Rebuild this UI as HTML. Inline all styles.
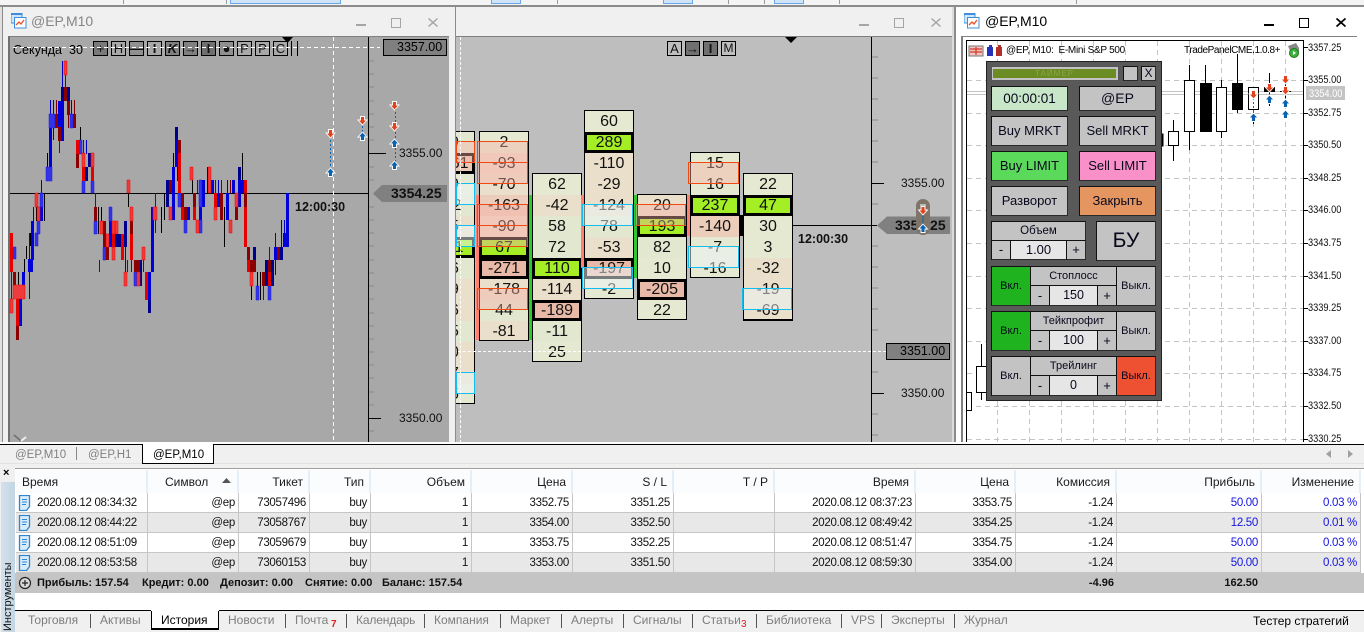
<!DOCTYPE html>
<html><head><meta charset="utf-8"><title>@EP,M10</title>
<style>
html,body{margin:0;padding:0;background:#f0f0f0}
#r{position:relative;width:1364px;height:632px;overflow:hidden;background:#f0f0f0;font-family:"Liberation Sans","Noto Sans CJK SC",sans-serif;font-size:12px;color:#000}
#r div,#r span.t{box-sizing:border-box}
.a{position:absolute}
.t{position:absolute;white-space:nowrap;line-height:14px}
.ttl{position:absolute;top:13px;font-size:14px;line-height:17px;white-space:nowrap}
svg{position:absolute;overflow:visible}
.fp{position:absolute;width:50px;border:1px solid #000;background:#e6e9d1;font-size:16px;line-height:21px;text-align:center;color:#111}
.fp div{height:21px;margin:0;position:relative}
.fp div:last-child{height:19px}
.n{background:#eadfca}
.m{background:#e2e7cf}
.g{background:#a3ee24;box-shadow:inset 0 0 0 3px #000;margin:0 -1px!important}
.p{background:#e8b9a6;box-shadow:inset 0 0 0 3px #000;margin:0 -1px!important}
.or{position:absolute;border:1px solid #f04a10;background:rgba(246,176,166,.42)}
.bl{position:absolute;border:1px solid #14bdf0;background:rgba(236,246,248,.5)}
.b{position:absolute;background:#c3c3c3;border:1px solid #111;border-right-color:#2a2a2a;border-bottom-color:#2a2a2a;text-align:center;color:#08081c;white-space:nowrap;overflow:hidden}
.tb{position:absolute;top:41px;width:15px;height:15px;border:1px solid #000;text-align:center;font-size:13px;line-height:13px;color:#111}
table{position:absolute;left:16px;top:470px;width:1345px;border-collapse:separate;border-spacing:0;table-layout:fixed;font-size:11.5px;letter-spacing:-.3px}
th{height:23px;padding:0 5px 0 0;text-align:right;font-weight:normal;background:#fbfcfe;border-right:2px solid #e6eef8;color:#1a1a1a;box-sizing:border-box;font-size:12px;letter-spacing:0}
td{height:20px;padding:1px 3px 0 0;text-align:right;border-right:1px solid #c6c6c6;border-bottom:1px solid #c6c6c6;box-sizing:border-box;color:#111;white-space:nowrap}
tr.e td{background:#e8e8e8}
td.u{color:#1414e0}
.tab{position:absolute;top:613px;color:#7d7d7d;font-size:12px;line-height:14px;white-space:nowrap}
.sp{position:absolute;top:614px;width:1px;height:14px;background:#555}
.sum{position:absolute;top:576px;font-weight:bold;font-size:11px;line-height:14px;white-space:nowrap;color:#111}
.lb{position:absolute;font-size:12px;line-height:14px;white-space:nowrap;color:#111}
.ax{position:absolute;left:1308px;font-size:11px;line-height:14px;white-space:nowrap;color:#111;transform:scaleX(.84);transform-origin:0 0}
</style></head><body><div id="r">

<!-- top strip -->
<div class="a" style="left:0;top:0;width:1364px;height:5px;background:#f4f4f4"></div>
<div class="a" style="left:230px;top:0;width:111px;height:4px;background:#cfe4f8;border:1px solid #6ba6e6;border-top:0"></div>
<div class="a" style="left:491px;top:0;width:30px;height:4px;background:#cfe4f8;border:1px solid #6ba6e6;border-top:0"></div>
<div class="a" style="left:663px;top:0;width:30px;height:4px;background:#cfe4f8;border:1px solid #6ba6e6;border-top:0"></div>
<div class="a" style="left:774px;top:0;width:30px;height:4px;background:#cfe4f8;border:1px solid #6ba6e6;border-top:0"></div>
<div class="a" style="left:123px;top:0;width:1px;height:4px;background:#999"></div>
<div class="a" style="left:226px;top:0;width:1px;height:4px;background:#999"></div>
<div class="a" style="left:557px;top:0;width:1px;height:4px;background:#999"></div>
<div class="a" style="left:728px;top:0;width:1px;height:4px;background:#999"></div>
<div class="a" style="left:764px;top:0;width:1px;height:4px;background:#999"></div>
<div class="a" style="left:839px;top:0;width:1px;height:4px;background:#999"></div>
<div class="a" style="left:1076px;top:0;width:1px;height:4px;background:#999"></div>
<div class="a" style="left:0;top:5px;width:1364px;height:2px;background:#8c8c8c"></div>

<!-- window frames -->
<div class="a" style="left:2px;top:7px;width:1px;height:436px;background:#8c8c8c"></div>
<div class="a" style="left:455px;top:7px;width:1px;height:436px;background:#8c8c8c"></div>
<div class="a" style="left:952px;top:7px;width:3px;height:436px;background:#dcdcdc"></div>
<div class="a" style="left:954px;top:7px;width:2px;height:436px;background:#8c8c8c"></div>
<div class="a" style="left:956px;top:7px;width:408px;height:436px;background:#fff"></div>
<div class="a" style="left:0;top:7px;width:2px;height:436px;background:#e0e0e0"></div>

<!-- shared symbols -->
<svg width="0" height="0" style="position:absolute">
<symbol id="ti" viewBox="0 0 16 16"><rect x="0" y="0" width="11" height="10" fill="#cfe6fa" stroke="#3d8fdc"/><rect x="0" y="0" width="11" height="2" fill="#3d8fdc"/><rect x="3.500" y="4.500" width="11.500" height="10.500" fill="#fff" stroke="#3d8fdc"/><path d="M5 12l3-3 2 2 3-4" fill="none" stroke="#e8502a" stroke-width="1.300"/></symbol>
<symbol id="dn" viewBox="-5.500 -5.500 11 11"><path d="M-4.500-.5h2.500v-3.500h4v3.500h2.500L0 4.500z" fill="#e2421c" stroke="#fff" stroke-width=".9"/></symbol>
<symbol id="up" viewBox="-5.500 -5.500 11 11"><path d="M-4.500 .5h2.500v3.500h4v-3.500h2.500L0-4.500z" fill="#0b62ad" stroke="#fff" stroke-width=".9"/></symbol>
<symbol id="doc" viewBox="0 0 13 16"><path d="M1.500.5h10v11l-3 4h-7z" fill="#d8ecfb" stroke="#2e86d0" stroke-width="1.300"/><path d="M4 4.500h5M4 7h5M4 9.500h4" stroke="#2e86d0"/></symbol>
</svg>

<!-- WINDOW 1 -->
<svg style="left:11px;top:13px" width="16" height="16"><use href="#ti" width="16" height="16"/></svg>
<div class="ttl" style="left:31px;color:#858585">@EP,M10</div>
<div class="a" style="left:356px;top:24px;width:10px;height:2px;background:#a5a5a5"></div>
<div class="a" style="left:391px;top:18px;width:10px;height:10px;border:1px solid #a5a5a5"></div>
<svg style="left:428px;top:18px" width="10" height="9"><path d="M.5.5l9 8M9.500.5l-9 8" stroke="#a5a5a5" stroke-width="1.500"/></svg>

<div class="a" style="left:8px;top:36px;width:441px;height:407px;background:#a8a8a8;border-top:1px solid #808080;border-left:2px solid #707070"></div>
<svg style="left:0;top:0" width="456" height="443">
<path d="M10 193.500H368" stroke="#000"/>
<path d="M333.500 37V442" stroke="#fff" stroke-dasharray="4 3"/>
<!-- wicks -->
<path d="M47.500 153V167M80.500 127V140M98.500 207V234M101.500 207V221M128.500 193V207M173.500 153V167M164.500 193V220M161.500 207V233M224.500 207V247M192.500 180V193M207.500 167V193M242.500 153V180M251.500 286V300M260.500 272V300M257.500 272V286M24.500 259V272M26.500 246V259M30.500 233V246M18.500 272V285M44.500 193V221M36.500 207V221" stroke="#000" fill="none"/>
<path d="M65.500 74V87M56.500 100V114M59.500 141V153M68.500 101V128M74.500 100V114M83.500 140V154M95.500 193V207M99.500 260V272M131.500 260V272M143.500 260V272M155.500 193V233M197.500 180V193M215.500 180V193M221.500 180V193M230.500 180V193M263.500 286V300M269.500 247V260M127.500 260V272M11.500 272V299" stroke="#7c0000" fill="none"/>
<path d="M62.500 61V87M50.500 100V114M53.500 100V114M53.500 128V140M71.500 100V114M86.500 140V154M41.500 180V193M33.500 207V221M125.500 247V272M177.500 167V181M29.500 233V299M218.500 180V193M227.500 180V193M275.500 233V275M281.500 220V247M284.500 220V233" stroke="#0000c8" fill="none"/>
<!-- bright blue -->
<path d="M61 101h3V141h-3zM49 128h3V167h-3zM151 207h3V272h-3zM148 272h3V300h-3zM175 140h3V167h-3zM172 167h3V220h-3zM109 221h3V247h-3zM238 180h3V207h-3zM241 180h3V193h-3zM286 193h3V247h-3zM283 233h3V247h-3zM274 247h3V260h-3zM226 193h3V220h-3zM232 180h3V193h-3zM187 207h3V220h-3zM202 180h3V207h-3zM199 207h3V220h-3zM217 193h3V207h-3zM211 180h3V193h-3zM31 221h3V260h-3zM40 207h3V221h-3zM28 259h5V272h-5zM22 272h3V285h-3zM19 299h3V326h-3zM58 101h3V127h-3z" fill="#0000da"/>
<!-- dark blue -->
<path d="M61 87h9V101h-9zM85 167h3V181h-3zM88 153h3V167h-3zM115 234h6V247h-6zM124 221h3V247h-3zM139 260h3V286h-3zM175 127h3V140h-3zM166 180h3V207h-3zM238 167h3V180h-3zM265 260h3V286h-3zM271 260h3V286h-3zM280 247h3V260h-3zM253 247h3V272h-3zM148 300h3V313h-3z" fill="#00008e"/>
<!-- light blue -->
<path d="M49 114h6V128h-6zM46 167h6V181h-6zM70 114h3V128h-3zM79 140h3V154h-3zM82 181h3V193h-3zM91 181h3V193h-3zM94 221h3V234h-3zM109 207h3V221h-3zM103 247h3V260h-3zM134 272h3V286h-3zM13 247h3V259h-3zM35 233h3V246h-3zM40 193h3V207h-3zM37 221h3V234h-3zM178 193h3V207h-3zM184 220h3V233h-3zM199 180h3V207h-3zM199 220h3V233h-3zM256 286h3V300h-3zM268 286h3V300h-3z" fill="#3434e4" stroke="#1818e8" stroke-width=".5"/>
<!-- dark red -->
<path d="M64 87h3V101h-3zM67 101h3V115h-3zM58 127h3V141h-3zM55 114h3V128h-3zM73 114h3V128h-3zM76 154h3V168h-3zM94 207h3V221h-3zM103 221h3V247h-3zM106 247h3V260h-3zM130 221h3V234h-3zM134 260h6V272h-6zM13 272h3V285h-3zM16 326h3V340h-3zM178 140h3V153h-3zM169 180h3V193h-3zM181 193h3V207h-3zM184 207h3V220h-3zM193 193h3V207h-3zM220 193h3V220h-3zM235 207h3V220h-3zM244 193h3V207h-3zM247 247h3V260h-3zM253 260h3V272h-3zM250 260h3V272h-3zM262 272h3V286h-3zM268 260h3V272h-3zM277 247h3V260h-3z" fill="#8b0000"/>
<!-- red -->
<path d="M76 140h3V154h-3zM82 167h3V181h-3zM91 167h3V181h-3zM130 234h3V260h-3zM145 272h3V300h-3zM121 234h3V260h-3zM112 234h3V260h-3zM178 153h3V193h-3zM181 207h3V220h-3zM193 207h3V220h-3zM244 180h3V193h-3zM244 207h3V247h-3zM10 233h3V272h-3zM16 299h3V326h-3zM268 272h3V286h-3zM247 260h3V272h-3zM214 193h3V207h-3z" fill="#e60000"/>
<!-- light red -->
<path d="M64 61h3V75h-3zM82 153h3V167h-3zM91 153h3V167h-3zM35 193h3V207h-3zM37 207h3V221h-3zM100 221h3V234h-3zM106 234h3V247h-3zM112 247h3V260h-3zM112 221h3V234h-3zM115 221h3V234h-3zM124 272h3V286h-3zM127 180h3V193h-3zM130 207h3V221h-3zM137 272h3V286h-3zM142 247h3V260h-3zM13 285h12V299h-12zM10 299h3V313h-3zM190 167h3V180h-3zM196 220h3V233h-3zM208 167h3V193h-3zM214 207h3V220h-3zM229 220h3V233h-3zM250 272h3V286h-3zM153 207h4V220h-4zM169 207h3V220h-3zM235 193h3V207h-3z" fill="#ee3c3c" stroke="#f00000" stroke-width=".5"/>
<!-- axis -->
<path d="M368.500 37V442" stroke="#000"/>
<path d="M369 61h5M369 74h5M369 87h5M369 101h5M369 114h5M369 127h5M369 140h5M369 167h5M369 180h5M369 207h5M369 220h5M369 233h5M369 246h5M369 260h5M369 273h5M369 286h5M369 299h5M369 313h5M369 326h5M369 339h5M369 352h5M369 365h5M369 378h5M369 392h5M369 405h5M369 431h5" stroke="#8a8a8a"/>
<path d="M369 153.500h17M369 418.500h12" stroke="#000"/>
<path d="M330.500 136V170M362.500 122V134M395.500 108V163" stroke="#0b62ad" stroke-dasharray="2 2"/>
<use href="#dn" x="325" y="128" width="11" height="11"/><use href="#up" x="325" y="167" width="11" height="11"/>
<use href="#dn" x="357" y="115" width="11" height="11"/><use href="#up" x="357" y="131" width="11" height="11"/>
<use href="#dn" x="389" y="100" width="11" height="11"/><use href="#dn" x="389" y="121" width="11" height="11"/><use href="#up" x="389" y="138" width="11" height="11"/><use href="#up" x="389" y="160" width="11" height="11"/>
<path d="M373 193.500l9-8.500H447V202H382z" fill="#808080"/>
<path d="M14 435l7 6" stroke="#6e6e6e" stroke-width="1.500" fill="none"/><path d="M21 441l5-4" stroke="#f0f0f0" stroke-width="2" fill="none"/>
</svg>
<div class="t" style="left:13px;top:43px;font-size:12.500px">Секунда</div>
<div class="t" style="left:69px;top:43px;font-size:12.500px">30</div>
<div class="tb" style="left:93px;background:#7a7a7a">+</div>
<div class="tb" style="left:111px">H</div>
<div class="tb" style="left:129px;background:#909090;font-weight:bold">—</div>
<div class="tb" style="left:147px;font-weight:bold">I</div>
<div class="tb" style="left:165px;background:#808080;font-style:italic;font-weight:bold">K</div>
<div class="tb" style="left:183px;background:#808080;font-weight:bold">→</div>
<div class="tb" style="left:201px;background:#707070;font-weight:bold">I</div>
<div class="tb" style="left:219px;background:#909090;font-weight:bold">●</div>
<div class="tb" style="left:237px">P</div>
<div class="tb" style="left:255px">P</div>
<div class="tb" style="left:273px">C</div>
<div class="a" style="left:291px;top:41px;width:7px;height:15px;border-left:1px solid #000;border-right:1px solid #000"></div>
<svg style="left:282px;top:37px" width="12" height="7"><path d="M0 0h11L5.500 6z" fill="#000"/></svg>
<svg style="left:0;top:0" width="456" height="60"><path d="M13 47.500H380" stroke="#fff" stroke-dasharray="4 3"/></svg>
<div class="a" style="left:383px;top:39px;width:64px;height:17px;background:#808080;border:1px solid #000"></div>
<div class="t" style="left:397px;top:40px;font-size:12.500px">3357.00</div>
<div class="t" style="left:391px;top:186px;font-weight:bold;font-size:14px;color:#111">3354.25</div>
<div class="t" style="left:295px;top:200px;font-weight:bold;font-size:12.500px;color:#111">12:00:30</div>
<div class="lb" style="left:399px;top:146px">3355.00</div>
<div class="lb" style="left:399px;top:411px">3350.00</div>

<!-- WINDOW 2 -->
<div class="a" style="left:859px;top:24px;width:10px;height:2px;background:#a5a5a5"></div>
<div class="a" style="left:894px;top:18px;width:10px;height:10px;border:1px solid #a5a5a5"></div>
<svg style="left:931px;top:18px" width="10" height="9"><path d="M.5.5l9 8M9.500.5l-9 8" stroke="#a5a5a5" stroke-width="1.500"/></svg>
<div class="a" style="left:456px;top:36px;width:496px;height:407px;background:#bebebe;border-top:1px solid #808080;overflow:hidden"></div>
<svg style="left:456px;top:0" width="496" height="443">
<path d="M415.500 37V442" stroke="#000"/>
<path d="M416 57h6M416 78h6M416 99h6M416 120h6M416 141h6M416 162h6M416 204h6M416 246h6M416 267h6M416 288h6M416 309h6M416 330h6M416 372h6M416 414h6M416 435h6" stroke="#8a8a8a"/>
<path d="M416 183.500h12M416 393.500h12M337 225.500h84" stroke="#000"/>
<path d="M421 225.500l10-9H494V234H431z" fill="#808080"/>
<path d="M329 37h12l-6 6z" fill="#000"/>
</svg>
<div class="a" style="left:886px;top:343px;width:64px;height:17px;background:#808080;border:1px solid #000"></div>
<div class="t" style="left:900px;top:344px;font-size:12.500px">3351.00</div>
<div class="lb" style="left:901px;top:176px">3355.00</div>
<div class="lb" style="left:901px;top:386px">3350.00</div>
<div class="t" style="left:798px;top:232px;font-weight:bold;font-size:12.500px;color:#111">12:00:30</div>
<div class="t" style="left:895px;top:218px;font-weight:bold;font-size:14px;color:#111">3354.25</div>
<div class="tb" style="left:667px;background:#bebebe">A</div>
<div class="tb" style="left:685px;background:#707070;font-weight:bold">→</div>
<div class="tb" style="left:703px;background:#707070;font-weight:bold">I</div>
<div class="tb" style="left:721px;background:#bebebe;font-size:12px">M</div>
<svg style="left:914px;top:199px" width="18" height="36">
<rect x="2" y="0" width="14" height="36" rx="7" fill="#7f7468"/>
<path d="M6 6h6" stroke="#fff"/>
<path d="M9 14V30" stroke="#0b62ad"/>
<use href="#dn" x="3.500" y="6" width="11" height="11"/><use href="#up" x="3.500" y="24" width="11" height="11"/>
</svg>

<!-- footprint -->
<div class="a" style="left:456px;top:37px;width:496px;height:406px;overflow:hidden;pointer-events:none">
<div class="fp" style="left:-31px;top:94px">
<div class="m">19</div><div class="p" style="background:#ecc7b4;padding-left:5px">-161</div><div>19</div><div class="m">-12</div><div class="n">15</div><div class="g">141</div><div class="m">16</div><div class="n">19</div><div class="n">26</div><div class="m">15</div><div class="n">10</div><div class="n">17</div><div>15</div>
</div>
<div class="fp" style="left:23px;top:94px">
<div>2</div><div class="n" style="background:#eed9c8">-93</div><div class="n">-70</div><div style="background:#eccdbb">-163</div><div style="background:#eed9c8">-90</div><div class="g">67</div><div class="p">-271</div><div class="n">-178</div><div class="m">44</div><div class="n">-81</div>
</div>
<div class="fp" style="left:76px;top:136px">
<div>62</div><div class="n">-42</div><div class="m">58</div><div class="m">72</div><div class="g">110</div><div class="n">-114</div><div class="p">-189</div><div class="m">-11</div><div>25</div>
</div>
<div class="fp" style="left:128px;top:73px">
<div>60</div><div class="g">289</div><div class="n">-110</div><div class="n">-29</div><div class="n">-124</div><div class="m">78</div><div class="n">-53</div><div class="p">-197</div><div>-2</div>
</div>
<div class="fp" style="left:181px;top:157px">
<div class="n">20</div><div class="g">193</div><div class="m">82</div><div>10</div><div class="p">-205</div><div>22</div>
</div>
<div class="fp" style="left:234px;top:115px">
<div>15</div><div>16</div><div class="g">237</div><div style="background:#ebcdb9">-140</div><div>-7</div><div>-16</div>
</div>
<div class="fp" style="left:287px;top:136px;border-bottom-width:2px">
<div>22</div><div class="g">47</div><div>30</div><div>3</div><div class="n">-32</div><div class="n">-19</div><div class="n">-69</div>
</div>
<!-- strips -->
<div class="a" style="left:20px;top:158px;width:3px;height:145px;background:#ff8070"></div>
<div class="a" style="left:73px;top:158px;width:3px;height:145px;background:#30c830"></div>
<div class="a" style="left:125px;top:158px;width:3px;height:73px;background:#ff8070"></div>
<div class="a" style="left:178px;top:158px;width:3px;height:83px;background:#30c830"></div>
<div class="a" style="left:231px;top:158px;width:3px;height:41px;background:#ff8070"></div>
<div class="a" style="left:283px;top:178px;width:4px;height:21px;background:#000"></div>
<!-- overlays -->
<div class="or" style="left:0;top:104px;width:19px;height:22px"></div>
<div class="bl" style="left:0;top:146px;width:19px;height:22px"></div>
<div class="bl" style="left:0;top:188px;width:19px;height:22px"></div>
<div class="bl" style="left:0;top:335px;width:19px;height:22px"></div>
<div class="or" style="left:21px;top:104px;width:51px;height:22px"></div>
<div class="or" style="left:21px;top:125px;width:51px;height:22px"></div>
<div class="or" style="left:21px;top:167px;width:51px;height:22px"></div>
<div class="or" style="left:21px;top:188px;width:51px;height:22px"></div>
<div class="or" style="left:21px;top:251px;width:51px;height:22px"></div>
<div class="bl" style="left:126px;top:167px;width:51px;height:22px"></div>
<div class="bl" style="left:126px;top:230px;width:51px;height:22px"></div>
<div class="or" style="left:179px;top:167px;width:51px;height:22px"></div>
<div class="or" style="left:232px;top:125px;width:51px;height:22px"></div>
<div class="bl" style="left:232px;top:209px;width:51px;height:22px"></div>
<div class="bl" style="left:286px;top:251px;width:50px;height:22px"></div>
<!-- dashed cross -->
<div class="a" style="left:4px;top:0;width:0;height:406px;border-left:1px dashed #fff"></div>
<div class="a" style="left:2px;top:314px;width:428px;height:0;border-top:1px dashed #fff"></div>
</div>

<!-- WINDOW 3 -->
<svg style="left:964px;top:13px" width="16" height="16"><use href="#ti" width="16" height="16"/></svg>
<div class="ttl" style="left:985px;color:#000">@EP,M10</div>
<div class="a" style="left:1264px;top:24px;width:10px;height:2px;background:#000"></div>
<div class="a" style="left:1299px;top:18px;width:10px;height:10px;border:1.500px solid #000"></div>
<svg style="left:1336px;top:18px" width="10" height="9"><path d="M.5.5l9 8M9.500.5l-9 8" stroke="#000" stroke-width="1.800"/></svg>
<div class="a" style="left:961px;top:36px;width:396px;height:407px;border:1px solid #808080;border-bottom:0;border-right:0;background:#fff;border-left-width:2px"></div>
<svg style="left:956px;top:0" width="408" height="443">
<g stroke="#c4c4c4" stroke-dasharray="5 4">
<path d="M11 80.500H347M11 113.500H347M11 145.500H347M11 178.500H347M11 210.500H347M11 243.500H347M11 276.500H347M11 308.500H347M11 341.500H347M11 373.500H347M11 406.500H347M11 439.500H347"/>
<path d="M41.500 41V442M73.500 41V442M105.500 41V442M137.500 41V442M169.500 41V442M201.500 41V442M233.500 41V442M265.500 41V442M297.500 41V442M329.500 41V442"/>
</g>
<path d="M11 91.500H347M11 94.500H347" stroke="#c4c4c4"/>
<path d="M10.500 40V442M347.500 40V442M10 40.500H348" stroke="#000" fill="none"/>
<path d="M348 47.500h4M348 80.500h4M348 113.500h4M348 145.500h4M348 178.500h4M348 210.500h4M348 243.500h4M348 276.500h4M348 308.500h4M348 341.500h4M348 373.500h4M348 406.500h4M348 439.500h4" stroke="#000"/>
<g stroke="#000" fill="none">
<path d="M233.500 65V150M249.500 65V84M265.500 80V138M281.500 54V113M297.500 109V124M313.500 73V106M329.500 78V105M217.500 120V161M25.500 344V400"/>
<rect x="228.500" y="80.500" width="10" height="51" fill="#fff"/>
<rect x="244.500" y="83.500" width="11" height="48" fill="#000"/>
<rect x="260.500" y="87.500" width="10" height="44" fill="#fff"/>
<rect x="276.500" y="83.500" width="10" height="26" fill="#000"/>
<rect x="292.500" y="87.500" width="10" height="22" fill="#fff"/>
<rect x="308.500" y="87.500" width="10" height="4" fill="#000"/>
<path d="M324 91.500H335"/>
<rect x="212.500" y="131.500" width="10" height="14" fill="#fff"/>
<rect x="205" y="134" width="2" height="12" fill="#000"/>
<rect x="20.500" y="366.500" width="10" height="26" fill="#fff"/>
<rect x="10.500" y="392.500" width="5" height="18" fill="#fff"/>
</g>
<path d="M297.500 98V112M313.500 90V96M329.500 82V112" stroke="#0b62ad" stroke-dasharray="2 2"/>
<use href="#dn" x="292" y="89" width="11" height="11"/><use href="#up" x="292" y="112" width="11" height="11"/>
<use href="#dn" x="308" y="82" width="11" height="11"/><use href="#up" x="308" y="94" width="11" height="11"/>
<use href="#dn" x="324" y="74" width="11" height="11"/><use href="#dn" x="324" y="85" width="11" height="11"/><use href="#up" x="324" y="98" width="11" height="11"/><use href="#up" x="324" y="109" width="11" height="11"/>
<!-- header icons -->
<rect x="13" y="46" width="14" height="10" fill="#f3c5c0" stroke="#777"/>
<path d="M14 49h12M14 52h12M20 47v8" stroke="#d03a2a" stroke-width="1.200"/>
<rect x="31" y="47" width="6" height="9" fill="#2632b8"/><rect x="40" y="47" width="6" height="9" fill="#b03028"/>
<rect x="33" y="45" width="3" height="3" fill="#2632b8"/><rect x="42" y="45" width="3" height="3" fill="#b03028"/>
<path d="M332 46l8-3 3 5v5h-8z" fill="#888"/>
<circle cx="338" cy="53" r="4.500" fill="#3db03d" stroke="#1e7a1e"/>
<path d="M337 51l3 2-3 2z" fill="#fff"/>
</svg>
<div class="a" style="left:1306px;top:86px;width:39px;height:14px;background:#c4c4c4"></div>
<div class="ax" style="top:87px;left:1309px;color:#fff">3354.00</div>
<div class="ax" style="top:41px">3357.25</div>
<div class="ax" style="top:73px">3355.00</div>
<div class="ax" style="top:106px">3352.75</div>
<div class="ax" style="top:138px">3350.50</div>
<div class="ax" style="top:171px">3348.25</div>
<div class="ax" style="top:203px">3346.00</div>
<div class="ax" style="top:236px">3343.75</div>
<div class="ax" style="top:269px">3341.50</div>
<div class="ax" style="top:301px">3339.25</div>
<div class="ax" style="top:334px">3337.00</div>
<div class="ax" style="top:366px">3334.75</div>
<div class="ax" style="top:399px">3332.50</div>
<div class="ax" style="top:432px">3330.25</div>
<div class="t" style="left:1006px;top:44px;font-size:10px;letter-spacing:-.28px">@EP, M10:&nbsp; E-Mini S&amp;P 500</div>
<div class="t" style="left:1184px;top:44px;font-size:10px;letter-spacing:-.42px">TradePanelCME.1.0.8+</div>

<!-- trade panel -->
<div class="a" style="left:986px;top:61px;width:176px;height:340px;background:#595959;border:1px solid #222"></div>
<div class="b" style="left:991px;top:66px;width:128px;height:15px;border-color:#555"></div>
<div class="a" style="left:993px;top:69px;width:123px;height:9px;background:#6b8c23;color:#8aa648;font-size:8px;line-height:9px;text-align:center;letter-spacing:1px">ТАЙМЕР</div>
<div class="b" style="left:1123px;top:66px;width:15px;height:15px"></div>
<div class="b" style="left:1141px;top:66px;width:15px;height:15px;font-size:12px;line-height:13px">X</div>
<div class="b" style="left:991px;top:86px;width:77px;height:25px;background:#c8e6c8;font-size:13.500px;line-height:23px">00:00:01</div>
<div class="b" style="left:1079px;top:86px;width:77px;height:25px;font-size:14px;line-height:23px">@EP</div>
<div class="b" style="left:991px;top:116px;width:77px;height:30px;font-size:13px;line-height:28px">Buy MRKT</div>
<div class="b" style="left:1079px;top:116px;width:77px;height:30px;font-size:13px;line-height:28px">Sell MRKT</div>
<div class="b" style="left:991px;top:151px;width:77px;height:30px;font-size:13px;line-height:28px;background:#5bd95b">Buy LIMIT</div>
<div class="b" style="left:1079px;top:151px;width:77px;height:30px;font-size:13px;line-height:28px;background:#fa90c8">Sell LIMIT</div>
<div class="b" style="left:991px;top:186px;width:77px;height:30px;font-size:13px;line-height:28px">Разворот</div>
<div class="b" style="left:1079px;top:186px;width:77px;height:30px;font-size:13px;line-height:28px;background:#e59660">Закрыть</div>

<div class="b" style="left:991px;top:221px;width:95px;height:20px;font-size:11.500px;line-height:18px">Объем</div>
<div class="b" style="left:991px;top:240px;width:20px;height:20px;font-size:13px;line-height:18px">-</div>
<div class="b" style="left:1010px;top:240px;width:57px;height:20px;background:#e6e6e6;font-size:13px;line-height:18px">1.00</div>
<div class="b" style="left:1066px;top:240px;width:20px;height:20px;font-size:13px;line-height:18px">+</div>
<div class="b" style="left:1096px;top:221px;width:60px;height:40px;font-size:21px;line-height:38px">БУ</div>

<div class="b" style="left:991px;top:266px;width:40px;height:40px;background:#1fb41f;font-size:11px;line-height:38px">Вкл.</div>
<div class="b" style="left:1030px;top:266px;width:87px;height:20px;font-size:11px;line-height:18px">Стоплосс</div>
<div class="b" style="left:1030px;top:285px;width:20px;height:21px;font-size:13px;line-height:19px">-</div>
<div class="b" style="left:1049px;top:285px;width:49px;height:21px;background:#e6e6e6;font-size:12.500px;line-height:19px">150</div>
<div class="b" style="left:1097px;top:285px;width:20px;height:21px;font-size:13px;line-height:19px">+</div>
<div class="b" style="left:1116px;top:266px;width:40px;height:40px;font-size:11px;line-height:38px">Выкл.</div>

<div class="b" style="left:991px;top:311px;width:40px;height:40px;background:#1fb41f;font-size:11px;line-height:38px">Вкл.</div>
<div class="b" style="left:1030px;top:311px;width:87px;height:20px;font-size:11px;line-height:18px">Тейкпрофит</div>
<div class="b" style="left:1030px;top:330px;width:20px;height:21px;font-size:13px;line-height:19px">-</div>
<div class="b" style="left:1049px;top:330px;width:49px;height:21px;background:#e6e6e6;font-size:12.500px;line-height:19px">100</div>
<div class="b" style="left:1097px;top:330px;width:20px;height:21px;font-size:13px;line-height:19px">+</div>
<div class="b" style="left:1116px;top:311px;width:40px;height:40px;font-size:11px;line-height:38px">Выкл.</div>

<div class="b" style="left:991px;top:356px;width:40px;height:40px;font-size:11px;line-height:38px">Вкл.</div>
<div class="b" style="left:1030px;top:356px;width:87px;height:20px;font-size:11px;line-height:18px">Трейлинг</div>
<div class="b" style="left:1030px;top:375px;width:20px;height:21px;font-size:13px;line-height:19px">-</div>
<div class="b" style="left:1049px;top:375px;width:49px;height:21px;background:#e6e6e6;font-size:12.500px;line-height:19px">0</div>
<div class="b" style="left:1097px;top:375px;width:20px;height:21px;font-size:13px;line-height:19px">+</div>
<div class="b" style="left:1116px;top:356px;width:40px;height:40px;background:#ee5032;font-size:11px;line-height:38px">Выкл.</div>

<!-- terminal bottom -->
<div class="a" style="left:0;top:442px;width:1364px;height:190px;background:#f0f0f0"></div>
<div class="a" style="left:0;top:442px;width:1364px;height:2px;background:#fff"></div>
<div class="a" style="left:0;top:444px;width:1364px;height:1px;background:#000"></div>
<div class="a" style="left:142px;top:444px;width:72px;height:20px;background:#fff;border:1px solid #000;border-top:0"></div>
<div class="a" style="left:0;top:463px;width:142px;height:1px;background:#e2e2e2"></div>
<div class="a" style="left:214px;top:463px;width:1150px;height:1px;background:#e2e2e2"></div>
<div class="a" style="left:76px;top:447px;width:1px;height:13px;background:#888"></div>
<div class="t" style="left:15px;top:448px;font-size:11.500px;color:#808080">@EP,M10</div>
<div class="t" style="left:88px;top:448px;font-size:11.500px;color:#808080">@EP,H1</div>
<div class="t" style="left:153px;top:448px;font-size:11.500px;color:#000">@EP,M10</div>
<svg style="left:1326px;top:450px" width="30" height="8"><path d="M5 0v8L0 4zM22 0v8l5-4z" fill="#a0a0a0"/></svg>

<div class="a" style="left:15px;top:468px;width:1349px;height:142px;background:#fff;border-top:1px solid #a0a0a0"></div>
<table>
<colgroup><col style="width:132px"><col style="width:91px"><col style="width:71px"><col style="width:61px"><col style="width:101px"><col style="width:101px"><col style="width:101px"><col style="width:101px"><col style="width:141px"><col style="width:100px"><col style="width:101px"><col style="width:145px"><col style="width:99px"></colgroup>
<tr><th style="text-align:left;padding-left:6px">Время</th><th style="text-align:left;padding-left:17px">Символ</th><th>Тикет</th><th>Тип</th><th>Объем</th><th>Цена</th><th>S / L</th><th>T / P</th><th>Время</th><th>Цена</th><th>Комиссия</th><th>Прибыль</th><th>Изменение</th></tr>
<tr><td style="text-align:left;padding-left:21px">2020.08.12 08:34:32</td><td>@ep</td><td>73057496</td><td>buy</td><td>1</td><td>3352.75</td><td>3351.25</td><td></td><td>2020.08.12 08:37:23</td><td>3353.75</td><td>-1.24</td><td class="u">50.00</td><td class="u">0.03 %</td></tr>
<tr class="e"><td style="text-align:left;padding-left:21px">2020.08.12 08:44:22</td><td>@ep</td><td>73058767</td><td>buy</td><td>1</td><td>3354.00</td><td>3352.50</td><td></td><td>2020.08.12 08:49:42</td><td>3354.25</td><td>-1.24</td><td class="u">12.50</td><td class="u">0.01 %</td></tr>
<tr><td style="text-align:left;padding-left:21px">2020.08.12 08:51:09</td><td>@ep</td><td>73059679</td><td>buy</td><td>1</td><td>3353.75</td><td>3352.25</td><td></td><td>2020.08.12 08:51:47</td><td>3354.75</td><td>-1.24</td><td class="u">50.00</td><td class="u">0.03 %</td></tr>
<tr class="e"><td style="text-align:left;padding-left:21px">2020.08.12 08:53:58</td><td>@ep</td><td>73060153</td><td>buy</td><td>1</td><td>3353.00</td><td>3351.50</td><td></td><td>2020.08.12 08:59:30</td><td>3354.00</td><td>-1.24</td><td class="u">50.00</td><td class="u">0.03 %</td></tr>
</table>
<svg style="left:222px;top:478px" width="10" height="6"><path d="M0 5L4.500 0 9 5z" fill="#555"/></svg>
<svg style="left:18px;top:495px" width="13" height="16"><use href="#doc" width="13" height="16"/></svg>
<svg style="left:18px;top:515px" width="13" height="16"><use href="#doc" width="13" height="16"/></svg>
<svg style="left:18px;top:535px" width="13" height="16"><use href="#doc" width="13" height="16"/></svg>
<svg style="left:18px;top:555px" width="13" height="16"><use href="#doc" width="13" height="16"/></svg>

<div class="a" style="left:15px;top:573px;width:1349px;height:20px;background:#c4c4c4"></div>
<svg style="left:18px;top:576px" width="14" height="14"><circle cx="7" cy="7" r="5.500" fill="#d8d8d8" stroke="#222" stroke-width="1.200"/><path d="M4 7h6M7 4v6" stroke="#222" stroke-width="1.200"/></svg>
<div class="sum" style="left:37px">Прибыль: 157.54</div>
<div class="sum" style="left:142px">Кредит: 0.00</div>
<div class="sum" style="left:220px">Депозит: 0.00</div>
<div class="sum" style="left:305px">Снятие: 0.00</div>
<div class="sum" style="left:382px">Баланс: 157.54</div>
<div class="sum" style="right:250px">-4.96</div>
<div class="sum" style="right:106px">162.50</div>

<!-- left sidebar -->
<div class="a" style="left:1px;top:482px;width:14px;height:150px;background:linear-gradient(90deg,#d3e1ec,#c3d5e3)"></div>
<div class="t" style="left:3px;top:466px;font-size:11px;font-weight:bold;line-height:14px">×</div>
<div class="a" style="left:1px;top:558px;width:14px;height:74px;overflow:hidden"><div class="t" style="left:0;top:73px;transform-origin:0 0;transform:rotate(-90deg);font-size:11px;line-height:14px;color:#111">Инструменты</div></div>

<!-- bottom tabs -->
<div class="a" style="left:15px;top:610px;width:1349px;height:1px;background:#000"></div>
<div class="a" style="left:151px;top:610px;width:68px;height:20px;background:#fff;border:1px solid #000;border-top:0;border-width:0 1px 2px 1px"></div>
<div class="a" style="left:151px;top:610px;width:68px;height:1px;background:#fff"></div>
<div class="tab" style="left:28px">Торговля</div><div class="sp" style="left:90px"></div>
<div class="tab" style="left:100px">Активы</div>
<div class="tab" style="left:161px;color:#000">История</div>
<div class="tab" style="left:228px">Новости</div><div class="sp" style="left:285px"></div>
<div class="tab" style="left:295px">Почта</div><div class="tab" style="left:331px;top:618px;color:#e02020;font-size:10px;font-weight:bold">7</div><div class="sp" style="left:346px"></div>
<div class="tab" style="left:356px;letter-spacing:-.15px">Календарь</div><div class="sp" style="left:424px"></div>
<div class="tab" style="left:434px">Компания</div><div class="sp" style="left:500px"></div>
<div class="tab" style="left:510px">Маркет</div><div class="sp" style="left:561px"></div>
<div class="tab" style="left:571px">Алерты</div><div class="sp" style="left:623px"></div>
<div class="tab" style="left:633px">Сигналы</div><div class="sp" style="left:692px"></div>
<div class="tab" style="left:702px">Статьи</div><div class="tab" style="left:741px;top:618px;color:#e02020;font-size:10px">3</div><div class="sp" style="left:756px"></div>
<div class="tab" style="left:766px">Библиотека</div><div class="sp" style="left:841px"></div>
<div class="tab" style="left:851px">VPS</div><div class="sp" style="left:881px"></div>
<div class="tab" style="left:891px">Эксперты</div><div class="sp" style="left:954px"></div>
<div class="tab" style="left:964px">Журнал</div>
<div class="tab" style="left:1253px;top:614px;color:#000">Тестер стратегий</div>

</div></body></html>
